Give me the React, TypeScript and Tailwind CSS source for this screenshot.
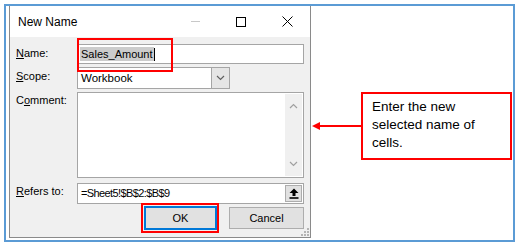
import React from 'react';

const ui = { fontFamily: '"Liberation Sans", Arial, sans-serif' };

const Label: React.FC<{ k: string; rest: string; pre?: string; pt: string }> = ({ k, rest, pre = '', pt }) => (
    <div className={`w-[61px] shrink-0 text-[11px] leading-[13px] text-black ${pt}`}>
        {pre}
        <span className="underline underline-offset-[1px]">{k}</span>
        {rest}
    </div>
);

const Chevron: React.FC<{ up?: boolean; color?: string }> = ({ up, color = '#a0a0a0' }) => (
    <svg width="9" height="6" viewBox="0 0 9 6">
        <path d={up ? 'M1 5 L4.5 1.5 L8 5' : 'M1 1 L4.5 4.5 L8 1'} fill="none" stroke={color} strokeWidth="1.2" />
    </svg>
);

const Dialog: React.FC = () => (
    <div className="relative ml-[3px] flex h-[232px] w-[302px] shrink-0 flex-col border-x border-b border-[#8a8a8a]" style={ui}>
        {/* title bar */}
        <div className="flex h-[31px] items-center bg-white">
            <span className="pl-[8px] text-[12px] text-black">New Name</span>
            <div className="ml-auto flex h-full">
                <div className="flex w-[46px] items-center justify-center">
                    <div className="h-px w-[9px] bg-[#c8c8c8]" />
                </div>
                <div className="flex w-[46px] items-center justify-center">
                    <div className="h-[10px] w-[10px] border border-black" />
                </div>
                <div className="flex w-[46px] items-center justify-center">
                    <svg width="11" height="11" viewBox="0 0 11 11">
                        <path d="M0.5 0.5 L10.5 10.5 M10.5 0.5 L0.5 10.5" stroke="#000" strokeWidth="1" />
                    </svg>
                </div>
            </div>
        </div>

        {/* body */}
        <div className="flex flex-1 flex-col bg-[#f0f0f0] px-[6px] pt-[7px]">
            <div className="flex">
                <Label k="N" rest="ame:" pt="pt-[3px]" />
                <div className="relative flex h-[20px] flex-1 items-center border border-[#a5a5a5] bg-white pl-[2px] text-[11px] text-black">
                    <span className="bg-[#cccccc] px-px leading-[14px]">Sales_Amount</span>
                    <span className="h-[13px] w-px bg-black" />
                    <div className="absolute left-[-1px] top-[-7px] h-[34px] w-[96px] border-2 border-[#ff0000]" />
                </div>
            </div>

            <div className="mt-[3px] flex">
                <Label k="S" rest="cope:" pt="pt-[3px]" />
                <div className="flex h-[22px] w-[153px] border border-[#a5a5a5] bg-white">
                    <span className="flex-1 pl-[3px] text-[11.5px] leading-[20px] text-black">Workbook</span>
                    <div className="flex w-[18px] items-center justify-center border-l border-[#a5a5a5] bg-[#e5e5e5]">
                        <Chevron color="#606060" />
                    </div>
                </div>
            </div>

            <div className="mt-[3px] flex">
                <Label pre="C" k="o" rest="mment:" pt="pt-[2px]" />
                <div className="flex h-[86px] flex-1 justify-end border border-[#a5a5a5] bg-white p-px">
                    <div className="flex w-[17px] flex-col items-center justify-between bg-[#f0f0f0] py-[9px]">
                        <Chevron up />
                        <Chevron />
                    </div>
                </div>
            </div>

            <div className="mt-[5px] flex">
                <Label k="R" rest="efers to:" pt="pt-[2px]" />
                <div className="flex h-[21px] flex-1 items-center border border-[#a5a5a5] bg-white pl-[3px] pr-px text-[11px] tracking-[-0.6px] text-black">
                    <span className="flex-1">=Sheet5!$B$2:$B$9</span>
                    <div className="flex h-[17px] w-[17px] items-center justify-center border border-[#adadad] bg-[#e1e1e1]">
                        <svg width="10" height="11" viewBox="0 0 10 11">
                            <path d="M5 0.5 L9.5 5 L6.5 5 L6.5 8 L3.5 8 L3.5 5 L0.5 5 Z" fill="#000" />
                            <rect x="0.5" y="9.2" width="9" height="1.6" fill="#000" />
                        </svg>
                    </div>
                </div>
            </div>

            <div className="mt-[2px] flex items-center justify-end text-[11px] text-black">
                <div className="relative flex h-[24px] w-[73px] items-center justify-center border-2 border-[#0078d7] bg-[#e1e1e1]">
                    OK
                    <div className="absolute left-[-5px] top-[-5px] h-[30px] w-[78px] border-2 border-[#ff0000]" />
                </div>
                <div className="ml-[12px] flex h-[22px] w-[75px] items-center justify-center border border-[#adadad] bg-[#e1e1e1]">
                    Cancel
                </div>
            </div>
        </div>

        {/* size grip */}
        <svg className="absolute bottom-[1px] right-[1px]" width="9" height="9" viewBox="0 0 9 9">
            {[
                [7, 1], [7, 4], [4, 4], [7, 7], [4, 7], [1, 7],
            ].map(([x, y]) => (
                <rect key={`${x}-${y}`} x={x} y={y} width="2" height="2" fill="#b4b4b4" />
            ))}
        </svg>
    </div>
);

const Callout: React.FC = () => (
    <div className="mt-[86px] flex items-center self-start">
        <svg width="50" height="10" viewBox="0 0 50 10">
            <path d="M1 5 L9 1 L9 9 Z" fill="#ff0000" />
            <rect x="8" y="4" width="42" height="2" fill="#ff0000" />
        </svg>
        <div
            className="h-[68px] w-[151px] border-2 border-[#ff0000] bg-white pl-[9px] pt-[4px] text-[13.5px] leading-[18px] text-black"
            style={ui}
        >
            Enter the new
            <br />
            selected name of
            <br />
            cells.
        </div>
    </div>
);

export default function App() {
    return (
        <div className="h-[247px] w-[520px] bg-white p-[4px]">
            <div className="flex h-[238px] w-[511px] border-2 border-[#5b9bd5]">
                <Dialog />
                <Callout />
            </div>
        </div>
    );
}
